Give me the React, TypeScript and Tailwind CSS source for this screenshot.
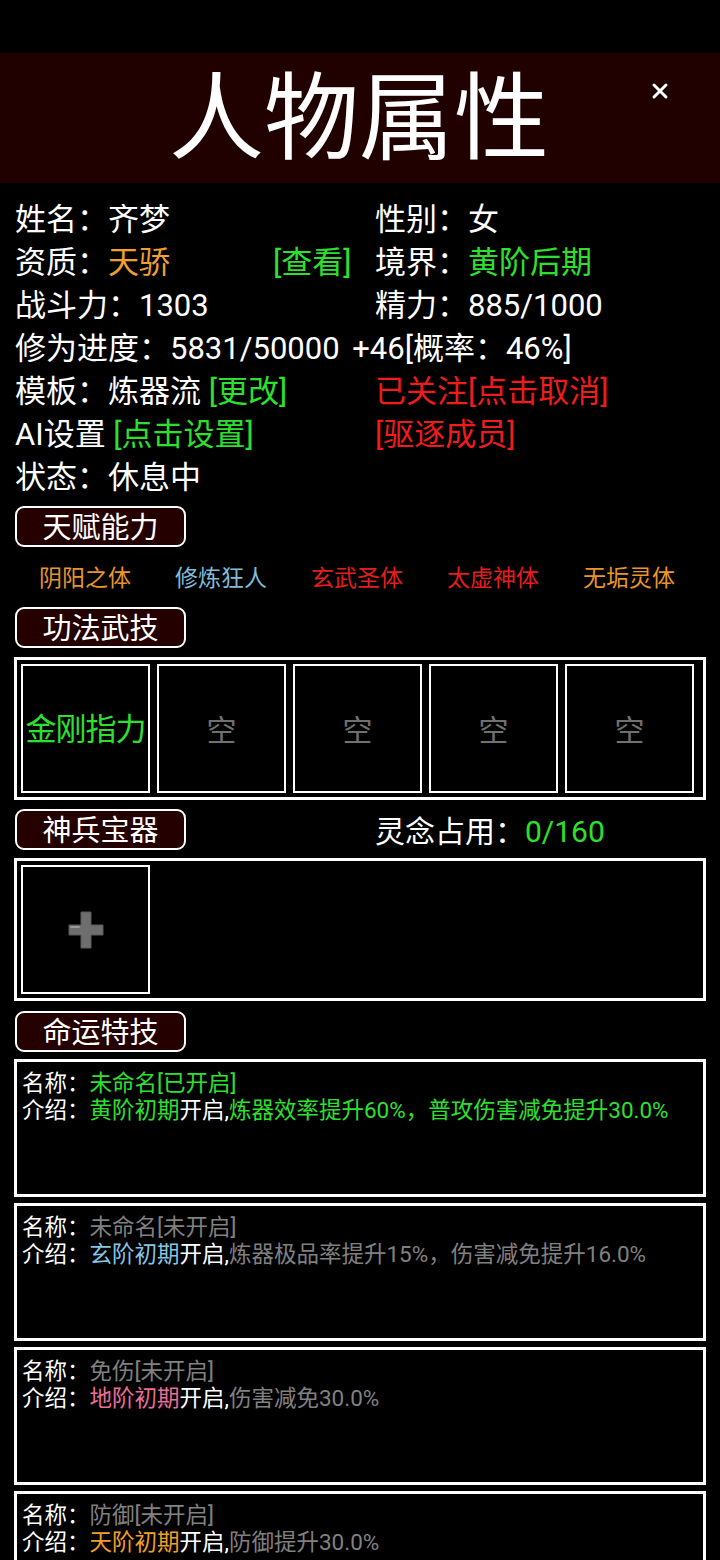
const font = { fontFamily: 'Roboto, "Noto Sans CJK SC", "Noto Sans", sans-serif' }

const SectionTitle = ({ title }: { title: string }) => (
  <div className="w-[171px] h-[41px] shrink-0 rounded-[9px] border-2 border-white bg-[#250000] flex items-center justify-center pt-[4px] text-[29px] leading-none text-white">
    {title}
  </div>
)

const talents = [
  { name: '阴阳之体', color: 'text-[#e8962a]' },
  { name: '修炼狂人', color: 'text-[#80bcd8]' },
  { name: '玄武圣体', color: 'text-[#e41e1e]' },
  { name: '太虚神体', color: 'text-[#e41e1e]' },
  { name: '无垢灵体', color: 'text-[#e8962a]' },
]

const skills = ['金刚指力', '空', '空', '空', '空']

interface FateSkill {
  name: string
  open: boolean
  tier: string
  tierColor: string
  desc: string
}

const fates: FateSkill[] = [
  { name: '未命名[已开启]', open: true, tier: '黄阶初期', tierColor: 'text-[#2ee02e]', desc: '炼器效率提升60%，普攻伤害减免提升30.0%' },
  { name: '未命名[未开启]', open: false, tier: '玄阶初期', tierColor: 'text-[#86c4e4]', desc: '炼器极品率提升15%，伤害减免提升16.0%' },
  { name: '免伤[未开启]', open: false, tier: '地阶初期', tierColor: 'text-[#ea6e98]', desc: '伤害减免30.0%' },
  { name: '防御[未开启]', open: false, tier: '天阶初期', tierColor: 'text-[#f0a024]', desc: '防御提升30.0%' },
]

const FateCard = ({ item }: { item: FateSkill }) => {
  const textColor = item.open ? 'text-[#2ee02e]' : 'text-[#808080]'
  return (
    <div className="h-[138px] border-[3px] border-white px-[5px] pt-[8px] text-[22.5px] text-white whitespace-nowrap">
      <div className="h-[27px] leading-[27px]">名称：<span className={textColor}>{item.name}</span></div>
      <div className="h-[27px] leading-[27px]">
        介绍：<span className={item.tierColor}>{item.tier}</span>开启,<span className={textColor}>{item.desc}</span>
      </div>
    </div>
  )
}

export default function App() {
  return (
    <div className="w-[720px] min-h-[1560px] bg-black text-white overflow-hidden" style={font}>
      <div className="h-[53px]" />
      <header className="relative h-[130px] bg-[#210000] flex items-center justify-center">
        <h1 className="text-[95px] leading-none text-white pr-[2px] mt-[3px]">人物属性</h1>
        <button className="absolute right-[50px] top-[28px] w-[20px] h-[20px] flex items-center justify-center">
          <svg width="18" height="18" viewBox="0 0 18 18">
            <path d="M3 3 L15 15 M15 3 L3 15" stroke="white" strokeWidth="3" strokeLinecap="round" />
          </svg>
        </button>
      </header>

      <main className="px-[15px]">
        <section className="pt-[15px] text-[31px] leading-[43px] whitespace-nowrap">
          <div className="flex">
            <div className="w-[360px]">姓名：齐梦</div>
            <div>性别：女</div>
          </div>
          <div className="flex">
            <div className="w-[360px] flex">
              <span className="w-[258px]">资质：<span className="text-[#f0a030]">天骄</span></span>
              <span className="text-[#2ee02e]">[查看]</span>
            </div>
            <div>境界：<span className="text-[#2ee02e]">黄阶后期</span></div>
          </div>
          <div className="flex">
            <div className="w-[360px]">战斗力：1303</div>
            <div>精力：885/1000</div>
          </div>
          <div>
            修为进度：5831/50000 <span className="ml-[5px]">+46[概率：46%]</span>
          </div>
          <div className="flex">
            <div className="w-[360px]">模板：炼器流 <span className="text-[#2ee02e]">[更改]</span></div>
            <div className="text-[#f01c1c]">已关注[点击取消]</div>
          </div>
          <div className="flex">
            <div className="w-[360px]">AI设置 <span className="text-[#2ee02e]">[点击设置]</span></div>
            <div className="text-[#f01c1c]">[驱逐成员]</div>
          </div>
          <div>状态：休息中</div>
        </section>

        <div className="mt-[7px]">
          <SectionTitle title="天赋能力" />
        </div>
        <div className="h-[60px] flex items-center pt-[5px] px-[2px]">
          {talents.map((t, i) => (
            <div key={i} className={`w-[136px] text-center text-[23px] ${t.color}`}>{t.name}</div>
          ))}
        </div>

        <SectionTitle title="功法武技" />
        <div className="mt-[9px] -mx-[1px] border-[3px] border-white p-[4px] flex gap-[7px]">
          {skills.map((s, i) => (
            <div
              key={i}
              className={`w-[129px] h-[129px] border-2 border-white flex items-center justify-center whitespace-nowrap pt-[3px] ${
                s === '空' ? 'text-[#707070] text-[30px]' : 'text-[#2ee02e] text-[31px] tracking-[-1px]'
              }`}
            >
              {s}
            </div>
          ))}
        </div>

        <div className="mt-[9px] h-[41px] flex items-center">
          <SectionTitle title="神兵宝器" />
          <div className="ml-[189px] pt-[4px] text-[30px] leading-none">
            灵念占用：<span className="text-[#2ee02e]">0/160</span>
          </div>
        </div>
        <div className="mt-[8px] -mx-[1px] border-[3px] border-white p-[4px] flex">
          <div className="w-[129px] h-[129px] border-2 border-white flex items-center justify-center">
            <svg width="36" height="38" viewBox="0 0 36 38">
              <path d="M13 1 H23 V14 H35 V24 H23 V37 H13 V24 H1 V14 H13 Z" fill="#6e6e6e" stroke="#5a5a5a" strokeWidth="1" strokeLinejoin="round" />
              <path d="M3 16 H11" stroke="#9a9a9a" strokeWidth="2" strokeLinecap="round" />
            </svg>
          </div>
        </div>

        <div className="mt-[10px]">
          <SectionTitle title="命运特技" />
        </div>
        <div className="mt-[7px] -mx-[1px] flex flex-col gap-[6px]">
          {fates.map((f, i) => (
            <FateCard key={i} item={f} />
          ))}
        </div>
      </main>
    </div>
  )
}
